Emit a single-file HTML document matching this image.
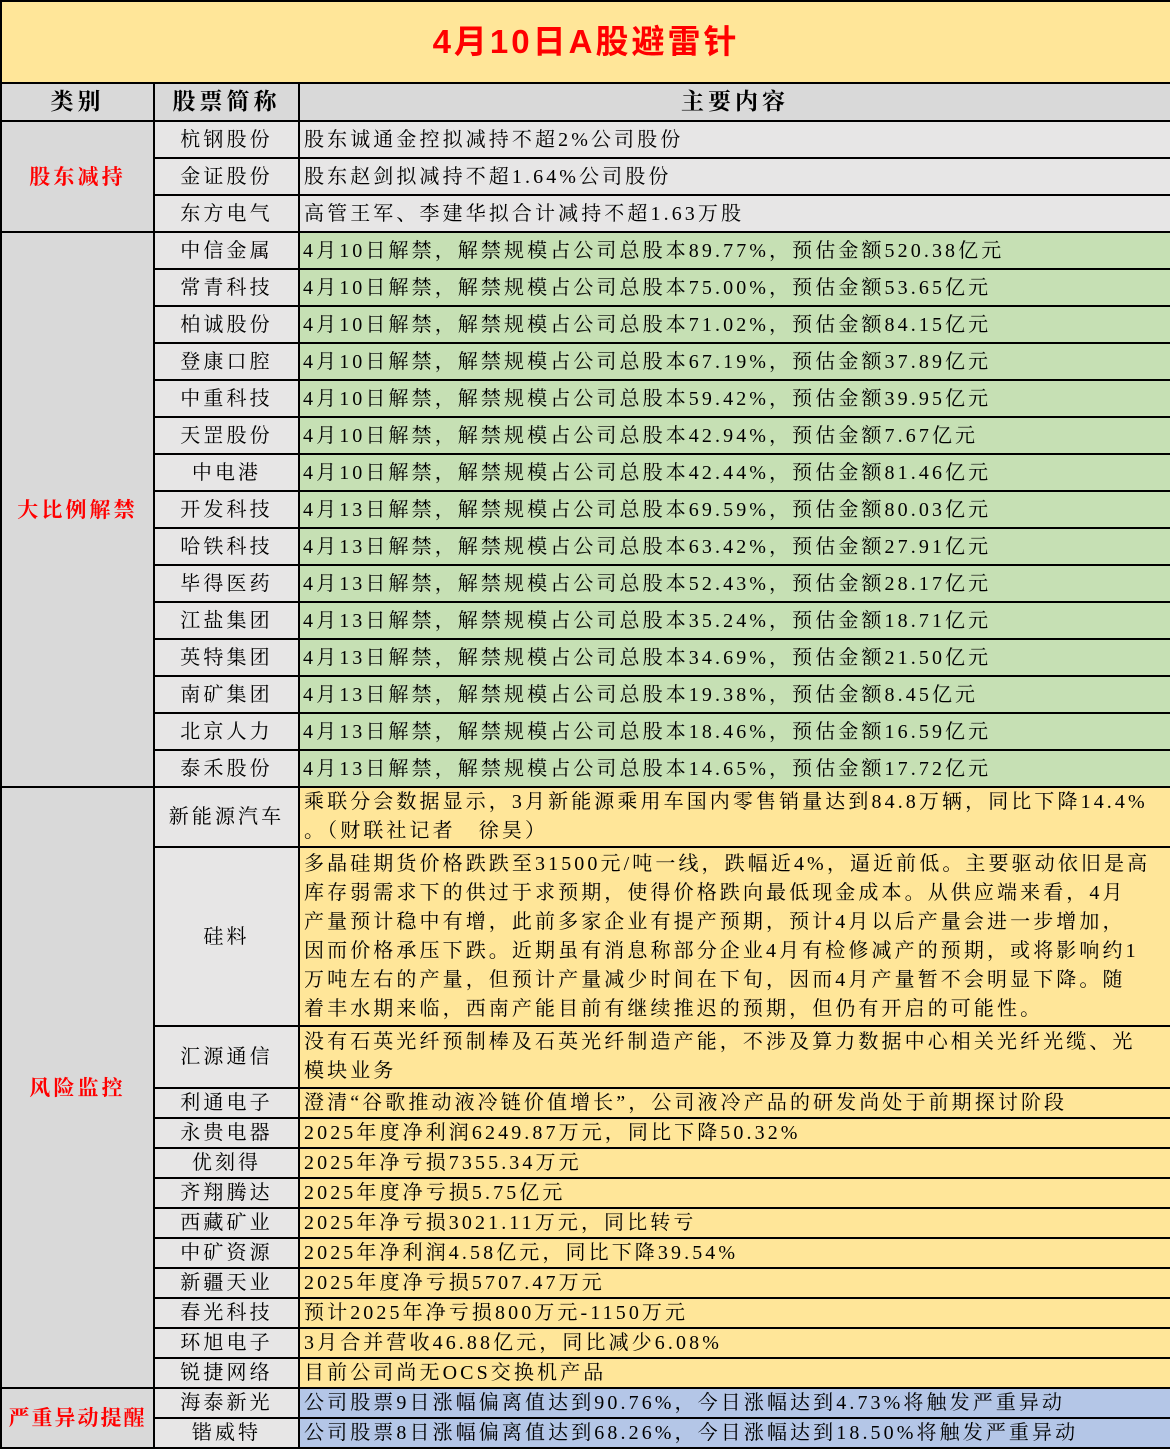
<!DOCTYPE html>
<html><head><meta charset="utf-8"><style>
*{margin:0;padding:0;box-sizing:border-box}
body{width:1170px;height:1448px;background:#fff;font-family:"Liberation Serif","Noto Serif CJK SC",serif;overflow:hidden}
table{border-collapse:collapse;table-layout:fixed;width:1170px}
td{border:2px solid #000;font-size:20px;letter-spacing:3.1px;white-space:nowrap;overflow:hidden;color:#000;line-height:28px;padding-top:0;padding-bottom:0}
.t{background:#FFE699;height:82px;text-align:center;color:#f00;font-weight:bold;font-size:33px;letter-spacing:3px;font-family:"Liberation Sans","Noto Sans CJK SC",sans-serif}
.h td{background:#D9D9D9;height:38px;text-align:center;font-weight:bold;font-size:23px;letter-spacing:4px}
.c1{background:#D9D9D9;color:#f00;font-weight:bold;text-align:center;font-size:21px}
.c2{background:#E7E6E6;text-align:center}
.g{background:#E7E6E6;padding-left:4px}
.gr{background:#C6E0B4;padding-left:3px}
.y{background:#FFE699;padding-left:4px}
.b{background:#B4C6E7;padding-left:4px}
.r37 td{height:37px}
.r30 td{height:30px;line-height:25px}
.m{line-height:29px}
</style></head><body>
<table>
<colgroup><col style="width:153px"><col style="width:145px"><col style="width:872px"></colgroup>
<tr><td colspan="3" class="t">4月10日A股避雷针</td></tr>
<tr class="h"><td>类别</td><td>股票简称</td><td>主要内容</td></tr>
<tr class="r37"><td class="c1" rowspan="3">股东减持</td><td class="c2">杭钢股份</td><td class="g">股东诚通金控拟减持不超2%公司股份</td></tr>
<tr class="r37"><td class="c2">金证股份</td><td class="g">股东赵剑拟减持不超1.64%公司股份</td></tr>
<tr class="r37"><td class="c2">东方电气</td><td class="g">高管王军、李建华拟合计减持不超1.63万股</td></tr>
<tr class="r37"><td class="c1" rowspan="15">大比例解禁</td><td class="c2">中信金属</td><td class="gr">4月10日解禁，解禁规模占公司总股本89.77%，预估金额520.38亿元</td></tr>
<tr class="r37"><td class="c2">常青科技</td><td class="gr">4月10日解禁，解禁规模占公司总股本75.00%，预估金额53.65亿元</td></tr>
<tr class="r37"><td class="c2">柏诚股份</td><td class="gr">4月10日解禁，解禁规模占公司总股本71.02%，预估金额84.15亿元</td></tr>
<tr class="r37"><td class="c2">登康口腔</td><td class="gr">4月10日解禁，解禁规模占公司总股本67.19%，预估金额37.89亿元</td></tr>
<tr class="r37"><td class="c2">中重科技</td><td class="gr">4月10日解禁，解禁规模占公司总股本59.42%，预估金额39.95亿元</td></tr>
<tr class="r37"><td class="c2">天罡股份</td><td class="gr">4月10日解禁，解禁规模占公司总股本42.94%，预估金额7.67亿元</td></tr>
<tr class="r37"><td class="c2">中电港</td><td class="gr">4月10日解禁，解禁规模占公司总股本42.44%，预估金额81.46亿元</td></tr>
<tr class="r37"><td class="c2">开发科技</td><td class="gr">4月13日解禁，解禁规模占公司总股本69.59%，预估金额80.03亿元</td></tr>
<tr class="r37"><td class="c2">哈铁科技</td><td class="gr">4月13日解禁，解禁规模占公司总股本63.42%，预估金额27.91亿元</td></tr>
<tr class="r37"><td class="c2">毕得医药</td><td class="gr">4月13日解禁，解禁规模占公司总股本52.43%，预估金额28.17亿元</td></tr>
<tr class="r37"><td class="c2">江盐集团</td><td class="gr">4月13日解禁，解禁规模占公司总股本35.24%，预估金额18.71亿元</td></tr>
<tr class="r37"><td class="c2">英特集团</td><td class="gr">4月13日解禁，解禁规模占公司总股本34.69%，预估金额21.50亿元</td></tr>
<tr class="r37"><td class="c2">南矿集团</td><td class="gr">4月13日解禁，解禁规模占公司总股本19.38%，预估金额8.45亿元</td></tr>
<tr class="r37"><td class="c2">北京人力</td><td class="gr">4月13日解禁，解禁规模占公司总股本18.46%，预估金额16.59亿元</td></tr>
<tr class="r37"><td class="c2">泰禾股份</td><td class="gr">4月13日解禁，解禁规模占公司总股本14.65%，预估金额17.72亿元</td></tr>
<tr><td class="c1" rowspan="13">风险监控</td><td class="c2" style="height:60px">新能源汽车</td><td class="y m">乘联分会数据显示，3月新能源乘用车国内零售销量达到84.8万辆，同比下降14.4%<br>。（财联社记者　徐昊）</td></tr>
<tr><td class="c2" style="height:179px">硅料</td><td class="y m">多晶硅期货价格跌跌至31500元/吨一线，跌幅近4%，逼近前低。主要驱动依旧是高<br>库存弱需求下的供过于求预期，使得价格跌向最低现金成本。从供应端来看，4月<br>产量预计稳中有增，此前多家企业有提产预期，预计4月以后产量会进一步增加，<br>因而价格承压下跌。近期虽有消息称部分企业4月有检修减产的预期，或将影响约1<br>万吨左右的产量，但预计产量减少时间在下旬，因而4月产量暂不会明显下降。随<br>着丰水期来临，西南产能目前有继续推迟的预期，但仍有开启的可能性。</td></tr>
<tr><td class="c2" style="height:62px">汇源通信</td><td class="y m">没有石英光纤预制棒及石英光纤制造产能，不涉及算力数据中心相关光纤光缆、光<br>模块业务</td></tr>
<tr class="r30"><td class="c2">利通电子</td><td class="y">澄清“谷歌推动液冷链价值增长”，公司液冷产品的研发尚处于前期探讨阶段</td></tr>
<tr class="r30"><td class="c2">永贵电器</td><td class="y">2025年度净利润6249.87万元，同比下降50.32%</td></tr>
<tr class="r30"><td class="c2">优刻得</td><td class="y">2025年净亏损7355.34万元</td></tr>
<tr class="r30"><td class="c2">齐翔腾达</td><td class="y">2025年度净亏损5.75亿元</td></tr>
<tr class="r30"><td class="c2">西藏矿业</td><td class="y">2025年净亏损3021.11万元，同比转亏</td></tr>
<tr class="r30"><td class="c2">中矿资源</td><td class="y">2025年净利润4.58亿元，同比下降39.54%</td></tr>
<tr class="r30"><td class="c2">新疆天业</td><td class="y">2025年度净亏损5707.47万元</td></tr>
<tr class="r30"><td class="c2">春光科技</td><td class="y">预计2025年净亏损800万元-1150万元</td></tr>
<tr class="r30"><td class="c2">环旭电子</td><td class="y">3月合并营收46.88亿元，同比减少6.08%</td></tr>
<tr class="r30"><td class="c2">锐捷网络</td><td class="y">目前公司尚无OCS交换机产品</td></tr>
<tr class="r30"><td class="c1" rowspan="2" style="letter-spacing:2px">严重异动提醒</td><td class="c2">海泰新光</td><td class="b">公司股票9日涨幅偏离值达到90.76%，今日涨幅达到4.73%将触发严重异动</td></tr>
<tr class="r30"><td class="c2">锴威特</td><td class="b">公司股票8日涨幅偏离值达到68.26%，今日涨幅达到18.50%将触发严重异动</td></tr>
</table>
</body></html>
